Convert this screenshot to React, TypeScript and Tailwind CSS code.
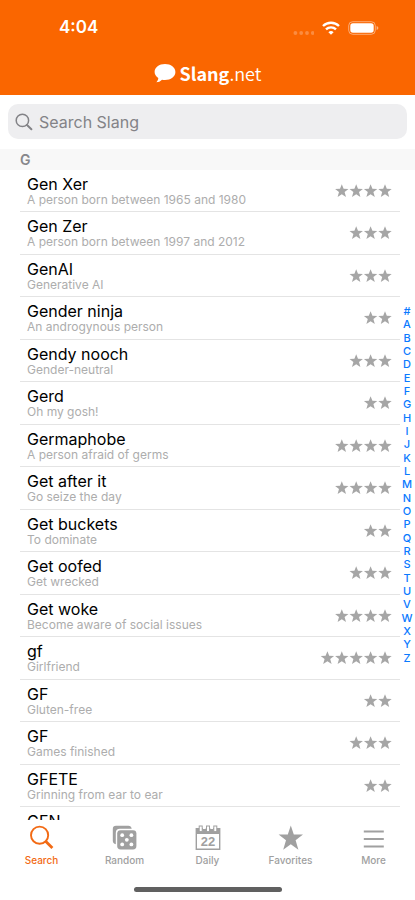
import React, { useState } from "react";

const entries = [
  { id: 1, term: "Gen Xer", meaning: "A person born between 1965 and 1980", stars: 4 },
  { id: 2, term: "Gen Zer", meaning: "A person born between 1997 and 2012", stars: 3 },
  { id: 3, term: "GenAI", meaning: "Generative AI", stars: 3 },
  { id: 4, term: "Gender ninja", meaning: "An androgynous person", stars: 2 },
  { id: 5, term: "Gendy nooch", meaning: "Gender-neutral", stars: 3 },
  { id: 6, term: "Gerd", meaning: "Oh my gosh!", stars: 2 },
  { id: 7, term: "Germaphobe", meaning: "A person afraid of germs", stars: 4 },
  { id: 8, term: "Get after it", meaning: "Go seize the day", stars: 4 },
  { id: 9, term: "Get buckets", meaning: "To dominate", stars: 2 },
  { id: 10, term: "Get oofed", meaning: "Get wrecked", stars: 3 },
  { id: 11, term: "Get woke", meaning: "Become aware of social issues", stars: 4 },
  { id: 12, term: "gf", meaning: "Girlfriend", stars: 5 },
  { id: 13, term: "GF", meaning: "Gluten-free", stars: 2 },
  { id: 14, term: "GF", meaning: "Games finished", stars: 3 },
  { id: 15, term: "GFETE", meaning: "Grinning from ear to ear", stars: 2 },
  { id: 16, term: "GFN", meaning: "", stars: 0 },
];

const letters = "#ABCDEFGHIJKLMNOPQRSTUVWXYZ".split("");

const STAR = "M0 -6.8 L1.8 -2.2 L6.7 -2 L2.8 1.1 L4.2 6 L0 3.2 L-4.2 6 L-2.8 1.1 L-6.7 -2 L-1.8 -2.2 Z";

function Rating({ count }: { count: number }) {
  return (
    <svg viewBox="0 0 72 14" className="w-[72px] h-3.5 shrink-0 fill-[#a6a6a6]" aria-hidden="true">
      {Array.from({ length: count }, (_, i) => (
        <path key={i} d={STAR} transform={`translate(${65 - i * 14.4} 7)`} />
      ))}
    </svg>
  );
}

function SearchIcon() {
  return (
    <svg viewBox="0 0 26 26" className="size-[26px]" fill="none" stroke="currentColor">
      <circle cx="10.6" cy="10.2" r="8.6" strokeWidth="1.9" />
      <path d="M16.6 16.2 L23.4 23" strokeWidth="2.8" />
    </svg>
  );
}

function DiceIcon() {
  return (
    <svg viewBox="0 0 26 26" className="size-[26px]" fill="currentColor">
      <path d="M4 0.8 H16.4 Q19.2 0.8 19.7 3.8 H8 Q3.8 3.8 3.8 8 V19.2 Q0.8 18.6 0.8 15.8 V4 Q0.8 0.8 4 0.8 Z" />
      <rect x="5.2" y="5.2" width="19.2" height="19.2" rx="3.4" />
      <g fill="#fff">
        <circle cx="10.2" cy="10.2" r="1.9" />
        <circle cx="19.4" cy="10.2" r="1.9" />
        <circle cx="14.8" cy="14.8" r="1.9" />
        <circle cx="10.2" cy="19.4" r="1.9" />
        <circle cx="19.4" cy="19.4" r="1.9" />
      </g>
    </svg>
  );
}

function CalendarIcon() {
  return (
    <svg viewBox="0 0 26 26" className="size-[26px]">
      <path
        fill="currentColor"
        fillRule="evenodd"
        d="M0.6 3 H25.4 V25 H0.6 Z M2 9 V23.6 H24 V9 Z"
      />
      <g fill="#fff" stroke="currentColor" strokeWidth="1">
        <rect x="4.2" y="1" width="3" height="5.6" />
        <rect x="11.5" y="1" width="3" height="5.6" />
        <rect x="18.8" y="1" width="3" height="5.6" />
      </g>
      <path d="M8 3.2 H10.7 M15.3 3.2 H18" stroke="#fff" strokeWidth="1.4" />
      <text
        x="13"
        y="20.8"
        textAnchor="middle"
        fill="currentColor"
        className="font-['Liberation_Sans',sans-serif] text-[13px] font-bold"
      >
        22
      </text>
    </svg>
  );
}

function StarIcon() {
  return (
    <svg viewBox="0 0 26 26" className="size-[26px]" fill="currentColor">
      <path d="M12.8 0.6 L15.8 9.4 L25 9.6 L17.6 15.2 L20.4 24.8 L12.8 19.2 L5.2 24.8 L8 15.2 L0.6 9.6 L9.8 9.4 Z" />
    </svg>
  );
}

function MoreIcon() {
  return (
    <svg viewBox="0 0 26 26" className="size-[26px]" stroke="currentColor" strokeWidth="2">
      <path d="M2.8 6.4 H22.8 M2.8 14 H22.8 M2.8 21.4 H22.8" />
    </svg>
  );
}

const tabs = [
  { label: "Search", icon: SearchIcon },
  { label: "Random", icon: DiceIcon },
  { label: "Daily", icon: CalendarIcon },
  { label: "Favorites", icon: StarIcon },
  { label: "More", icon: MoreIcon },
];

function StatusBar() {
  return (
    <div className="flex items-center justify-between h-14 pl-[59px] pr-9">
      <span className="text-[17px] font-semibold">4:04</span>
      <div className="flex items-center gap-2">
        <svg viewBox="0 0 22 14" className="w-[22px] h-3.5 fill-white/25">
          <circle cx="3.4" cy="12" r="1.9" />
          <circle cx="9.2" cy="12" r="1.9" />
          <circle cx="15" cy="12" r="1.9" />
          <circle cx="20.8" cy="12" r="1.9" />
        </svg>
        <svg viewBox="0 0 18 14" className="w-[18px] h-3.5" fill="none" stroke="#fff" strokeWidth="2.4">
          <path d="M1 5 A11.6 11.6 0 0 1 17 5" />
          <path d="M4 8.4 A7.2 7.2 0 0 1 14 8.4" />
          <path d="M9 13.8 L6.4 11.2 A3.8 3.8 0 0 1 11.6 11.2 Z" fill="#fff" stroke="none" />
        </svg>
        <svg viewBox="0 0 31 14" className="w-[31px] h-3.5">
          <rect x="0.7" y="0.7" width="26.6" height="12.6" rx="4" fill="none" stroke="#fff" strokeOpacity="0.45" />
          <rect x="2.3" y="2.3" width="23.4" height="9.4" rx="2.6" fill="#fff" />
          <path d="M28.6 5 Q30.4 5.6 30.4 7 Q30.4 8.4 28.6 9 Z" fill="#fff" fillOpacity="0.5" />
        </svg>
      </div>
    </div>
  );
}

export default function App() {
  const [query, setQuery] = useState("");
  const [active, setActive] = useState("Search");

  return (
    <div className="flex flex-col h-screen bg-white text-black font-[Inter,sans-serif]">
      {/* Header */}
      <header className="bg-[#fa6600] text-white">
        <StatusBar />
        <h1 className="flex items-center justify-center gap-1 h-[39px] pb-1.5 font-['Noto_Sans_CJK_JP',sans-serif] text-[18px] leading-6">
          <svg viewBox="0 0 22 20" className="w-[22px] h-5" fill="#fff">
            <path d="M11 1 C16.8 1 21.4 4.4 21.4 9 C21.4 13.6 16.8 17 11 17 C9.9 17 8.9 16.9 8 16.7 C6.4 18.4 4.4 19.2 2.4 19.2 C3.5 18 4.2 16.6 4.3 15 C2 13.6 0.6 11.4 0.6 9 C0.6 4.4 5.2 1 11 1 Z" />
          </svg>
          <span>
            <b>Slang</b>
            <span className="font-[350]">.net</span>
          </span>
        </h1>
      </header>

      {/* Search field */}
      <div className="px-2 pt-[9px] pb-2.5">
        <label className="flex items-center gap-1.5 h-[35px] px-[7px] rounded-[10px] bg-[#eeeef0] text-[#838387]">
          <svg viewBox="0 0 18 18" className="size-[18px]" fill="none" stroke="currentColor" strokeLinecap="round">
            <circle cx="7.4" cy="7.4" r="6.2" strokeWidth="1.5" />
            <path d="M12 12 L16.4 16.2" strokeWidth="2" />
          </svg>
          <input
            type="text"
            aria-label="Search Slang"
            placeholder="Search Slang"
            value={query}
            onChange={(e) => setQuery(e.target.value)}
            className="flex-1 min-w-0 text-[16px] bg-transparent outline-none placeholder:text-[#838387]"
          />
        </label>
      </div>

      {/* Slang list */}
      <main className="relative flex-1 min-h-0 overflow-hidden">
        <h2 className="h-[21px] pl-5 bg-[#f8f8f8] text-[14px] leading-[21px] font-semibold text-[#87878b]">G</h2>
        <ul className="pl-5 pr-[15px]">
          {entries.map((entry) => (
            <li
              key={entry.id}
              className="flex items-center justify-between odd:h-[42px] even:h-[43px] pl-[7px] pr-2 border-b border-[#e4e4e4]"
            >
              <div className="h-full pt-[5px]">
                <p className="text-[16px] leading-[18px]">{entry.term}</p>
                {entry.meaning && <p className="text-[12px] leading-[14px] text-[#adadad]">{entry.meaning}</p>}
              </div>
              <Rating count={entry.stars} />
            </li>
          ))}
        </ul>
        <nav aria-label="Index" className="absolute inset-y-0 right-0 flex items-center">
          <div className="flex flex-col w-4 h-[360px]">
            {letters.map((letter) => (
              <a
                key={letter}
                href={`#${letter}`}
                className="flex flex-1 items-center justify-center text-[11px] leading-3 font-medium text-[#0a7aff]"
              >
                {letter}
              </a>
            ))}
          </div>
        </nav>
      </main>

      {/* Tab bar */}
      <footer className="bg-white pt-[5px] pb-2">
        <div className="grid grid-cols-5">
          {tabs.map(({ label, icon: Icon }) => (
            <button
              key={label}
              type="button"
              onClick={() => setActive(label)}
              className={`flex flex-col items-center gap-[3px] ${active === label ? "text-[#f26a14]" : "text-[#a0a0a0]"}`}
            >
              <Icon />
              <span className="text-[10px] leading-3 font-medium">{label}</span>
            </button>
          ))}
        </div>
        <div className="w-[148px] h-[5px] mt-[21px] mx-auto rounded-full bg-[#606060]" />
      </footer>
    </div>
  );
}
